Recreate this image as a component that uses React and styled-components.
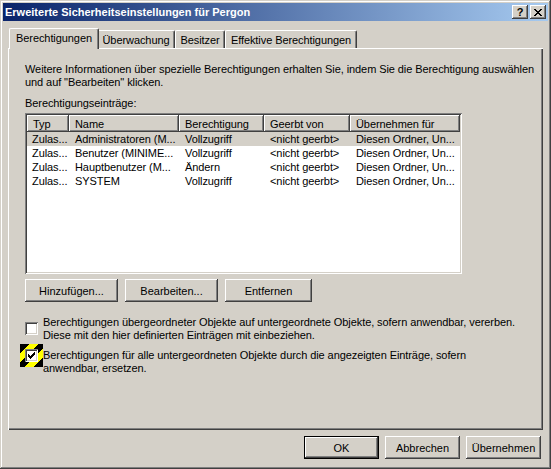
import styled, { createGlobalStyle } from 'styled-components'

const GlobalStyle = createGlobalStyle`
  html, body {
    margin: 0;
    padding: 0;
    background: #d4d0c8;
  }
  body {
    font-family: "Liberation Sans", Arial, sans-serif;
    font-size: 11px;
    letter-spacing: -0.08px;
    color: #000;
  }
`;

const raised = `
  box-shadow: inset -1px -1px #404040, inset 1px 1px #fff,
    inset -2px -2px #808080, inset 2px 2px #d4d0c8;
`;

const sunken = `
  box-shadow: inset 1px 1px #808080, inset -1px -1px #fff,
    inset 2px 2px #404040, inset -2px -2px #d4d0c8;
`;

const Window = styled.div`
  width: 551px;
  height: 469px;
  box-sizing: border-box;
  padding: 3px;
  background: #d4d0c8;
  box-shadow: inset -1px -1px #404040, inset 1px 1px #d4d0c8,
    inset -2px -2px #808080, inset 2px 2px #fff;
  display: flex;
  flex-direction: column;
`;

const TitleBar = styled.div`
  height: 18px;
  display: flex;
  align-items: center;
  padding: 0 2px 0 2px;
  background: linear-gradient(90deg, #0a246a, #a6caf0);
  color: #fff;
  font-weight: bold;
  font-size: 11px;
  letter-spacing: 0;
  white-space: nowrap;
`;

const CaptionButtons = styled.div`
  margin-left: auto;
  display: flex;
  gap: 2px;
`;

const CaptionButton = styled.div`
  width: 16px;
  height: 14px;
  box-sizing: border-box;
  background: #d4d0c8;
  ${raised}
  display: flex;
  align-items: center;
  justify-content: center;
  color: #000;
  font-weight: bold;
  font-size: 11px;
  line-height: 14px;
`;

const Body = styled.div`
  padding: 7px 5px 0 5px;
  display: flex;
  flex-direction: column;
`;

const TabStrip = styled.div`
  height: 20px;
  display: flex;
  align-items: flex-end;
  padding-left: 3px;
`;

const Tab = styled.div`
  position: relative;
  z-index: ${p => (p.$active ? 2 : 1)};
  box-sizing: border-box;
  width: ${p => (p.$active ? p.$w + 4 : p.$w)}px;
  height: ${p => (p.$active ? 21 : 18)}px;
  margin: 0 ${p => (p.$active ? -2 : 0)}px ${p => (p.$active ? -1 : 0)}px;
  background: #d4d0c8;
  border-top: 1px solid #fff;
  border-left: 1px solid #fff;
  border-right: 1px solid #404040;
  border-radius: 2px 2px 0 0;
  box-shadow: inset -1px 0 #808080;
  display: flex;
  align-items: center;
  justify-content: center;
  padding-bottom: ${p => (p.$active ? 2 : 0)}px;
  white-space: nowrap;
`;

const Panel = styled.div`
  height: 382px;
  box-sizing: border-box;
  padding: 15px 17px 0 17px;
  box-shadow: inset 1px 1px #fff, inset -1px -1px #404040, inset -2px -2px #808080;
  display: flex;
  flex-direction: column;
`;

const Text = styled.div`
  line-height: 13px;
  white-space: nowrap;
  margin-top: ${p => p.$mt || 0}px;
`;

const ListBox = styled.div`
  margin-top: 3px;
  width: 437px;
  height: 161px;
  box-sizing: border-box;
  padding: 2px;
  background: #fff;
  ${sunken}
  overflow: hidden;
`;

const Grid = styled.div`
  display: grid;
  grid-template-columns: 42px 110px 85px 86px 110px;
`;

const HeaderCell = styled.div`
  height: 17px;
  box-sizing: border-box;
  background: #d4d0c8;
  ${raised}
  padding: 0 6px;
  display: flex;
  align-items: center;
  white-space: nowrap;
  overflow: hidden;
`;

const Cell = styled.div`
  height: 14px;
  padding: 0 6px 0 ${p => (p.$first ? 5 : 6)}px;
  line-height: 14px;
  white-space: nowrap;
  overflow: hidden;
  background: ${p => (p.$selected ? '#d4d0c8' : '#fff')};
`;

const ButtonRow = styled.div`
  display: flex;
  gap: ${p => p.$gap || 6}px;
  margin-top: ${p => p.$mt || 0}px;
  justify-content: ${p => (p.$right ? 'flex-end' : 'flex-start')};
  padding-right: ${p => (p.$right ? 1 : 0)}px;
`;

const Button = styled.button`
  width: ${p => p.$w}px;
  height: 23px;
  box-sizing: border-box;
  border: none;
  padding: 0;
  background: #d4d0c8;
  font-family: "Liberation Sans", Arial, sans-serif;
  font-size: 11px;
  color: #000;
  ${p =>
    p.$default
      ? 'box-shadow: inset 0 0 0 1px #000, inset -2px -2px #404040, inset 2px 2px #fff, inset -3px -3px #808080;'
      : raised}
`;

const CheckRow = styled.div`
  display: flex;
  align-items: ${p => (p.$top ? 'flex-start' : 'center')};
  margin: ${p => p.$mt}px 0 0 -5px;
`;

const CheckFrame = styled.div`
  width: 23px;
  height: 23px;
  flex: none;
  display: flex;
  align-items: center;
  justify-content: center;
  background: ${p =>
    p.$focus
      ? 'repeating-linear-gradient(135deg, #000 0 6.5px, #ff0 6.5px 13px)'
      : 'transparent'};
`;

const CheckBox = styled.div`
  width: 13px;
  height: 13px;
  box-sizing: border-box;
  background: #fff;
  ${sunken}
  display: flex;
  align-items: center;
  justify-content: center;
`;

const CheckLabel = styled.div`
  line-height: 13px;
  white-space: nowrap;
  margin-top: ${p => p.$mt || 0}px;
`;

const Footer = styled.div`
  padding: 6px 1px 0 0;
`;

function CloseGlyph() {
  const rects = [];
  for (let r = 0; r < 7; r++) {
    rects.push(<rect key={'a' + r} x={r} y={r} width={2} height={1} />);
    rects.push(<rect key={'b' + r} x={6 - r} y={r} width={2} height={1} />);
  }
  return (
    <svg width="8" height="7" viewBox="0 0 8 7" shapeRendering="crispEdges" fill="#000">
      {rects}
    </svg>
  );
}

function CheckGlyph() {
  const map = [
    '......#',
    '.....##',
    '#...###',
    '##.###.',
    '#####..',
    '.###...',
    '..#....',
  ];
  const rects = [];
  map.forEach((row, y) =>
    row.split('').forEach((c, x) => {
      if (c === '#') rects.push(<rect key={x + '-' + y} x={x} y={y} width={1} height={1} />);
    })
  );
  return (
    <svg width="7" height="7" viewBox="0 0 7 7" shapeRendering="crispEdges" fill="#000">
      {rects}
    </svg>
  );
}

const tabs = [
  { label: 'Berechtigungen', w: 86, active: true },
  { label: 'Überwachung', w: 78 },
  { label: 'Besitzer', w: 50 },
  { label: 'Effektive Berechtigungen', w: 132 },
];

const columns = ['Typ', 'Name', 'Berechtigung', 'Geerbt von', 'Übernehmen für'];

const entries = [
  ['Zulas...', 'Administratoren (M...', 'Vollzugriff', '<nicht geerbt>', 'Diesen Ordner, Un...'],
  ['Zulas...', 'Benutzer (MINIME...', 'Vollzugriff', '<nicht geerbt>', 'Diesen Ordner, Un...'],
  ['Zulas...', 'Hauptbenutzer (M...', 'Ändern', '<nicht geerbt>', 'Diesen Ordner, Un...'],
  ['Zulas...', 'SYSTEM', 'Vollzugriff', '<nicht geerbt>', 'Diesen Ordner, Un...'],
];

export default function App() {
  return (
    <>
      <GlobalStyle />
      <Window>
        <TitleBar>
          Erweiterte Sicherheitseinstellungen für Pergon
          <CaptionButtons>
            <CaptionButton>?</CaptionButton>
            <CaptionButton>
              <CloseGlyph />
            </CaptionButton>
          </CaptionButtons>
        </TitleBar>
        <Body>
          <TabStrip>
            {tabs.map(t => (
              <Tab key={t.label} $w={t.w} $active={t.active}>
                {t.label}
              </Tab>
            ))}
          </TabStrip>
          <Panel>
            <Text>
              Weitere Informationen über spezielle Berechtigungen erhalten Sie, indem Sie die Berechtigung auswählen
              <br />
              und auf "Bearbeiten" klicken.
            </Text>
            <Text $mt={8}>Berechtigungseinträge:</Text>
            <ListBox>
              <Grid>
                {columns.map(c => (
                  <HeaderCell key={c}>{c}</HeaderCell>
                ))}
                {entries.map((row, i) =>
                  row.map((v, j) => (
                    <Cell key={i + '-' + j} $selected={i === 0} $first={j === 0}>
                      {v}
                    </Cell>
                  ))
                )}
              </Grid>
            </ListBox>
            <ButtonRow $mt={5} $gap={7}>
              <Button $w={93}>Hinzufügen...</Button>
              <Button $w={93}>Bearbeiten...</Button>
              <Button $w={87}>Entfernen</Button>
            </ButtonRow>
            <CheckRow $mt={13}>
              <CheckFrame>
                <CheckBox />
              </CheckFrame>
              <CheckLabel $mt={1}>
                Berechtigungen übergeordneter Objekte auf untergeordnete Objekte, sofern anwendbar, vererben.
                <br />
                Diese mit den hier definierten Einträgen mit einbeziehen.
              </CheckLabel>
            </CheckRow>
            <CheckRow $mt={2} $top>
              <CheckFrame $focus>
                <CheckBox>
                  <CheckGlyph />
                </CheckBox>
              </CheckFrame>
              <CheckLabel $mt={5}>
                Berechtigungen für alle untergeordneten Objekte durch die angezeigten Einträge, sofern
                <br />
                anwendbar, ersetzen.
              </CheckLabel>
            </CheckRow>
          </Panel>
          <Footer>
            <ButtonRow $right>
              <Button $w={75} $default>OK</Button>
              <Button $w={75}>Abbrechen</Button>
              <Button $w={75}>Übernehmen</Button>
            </ButtonRow>
          </Footer>
        </Body>
      </Window>
    </>
  );
}
